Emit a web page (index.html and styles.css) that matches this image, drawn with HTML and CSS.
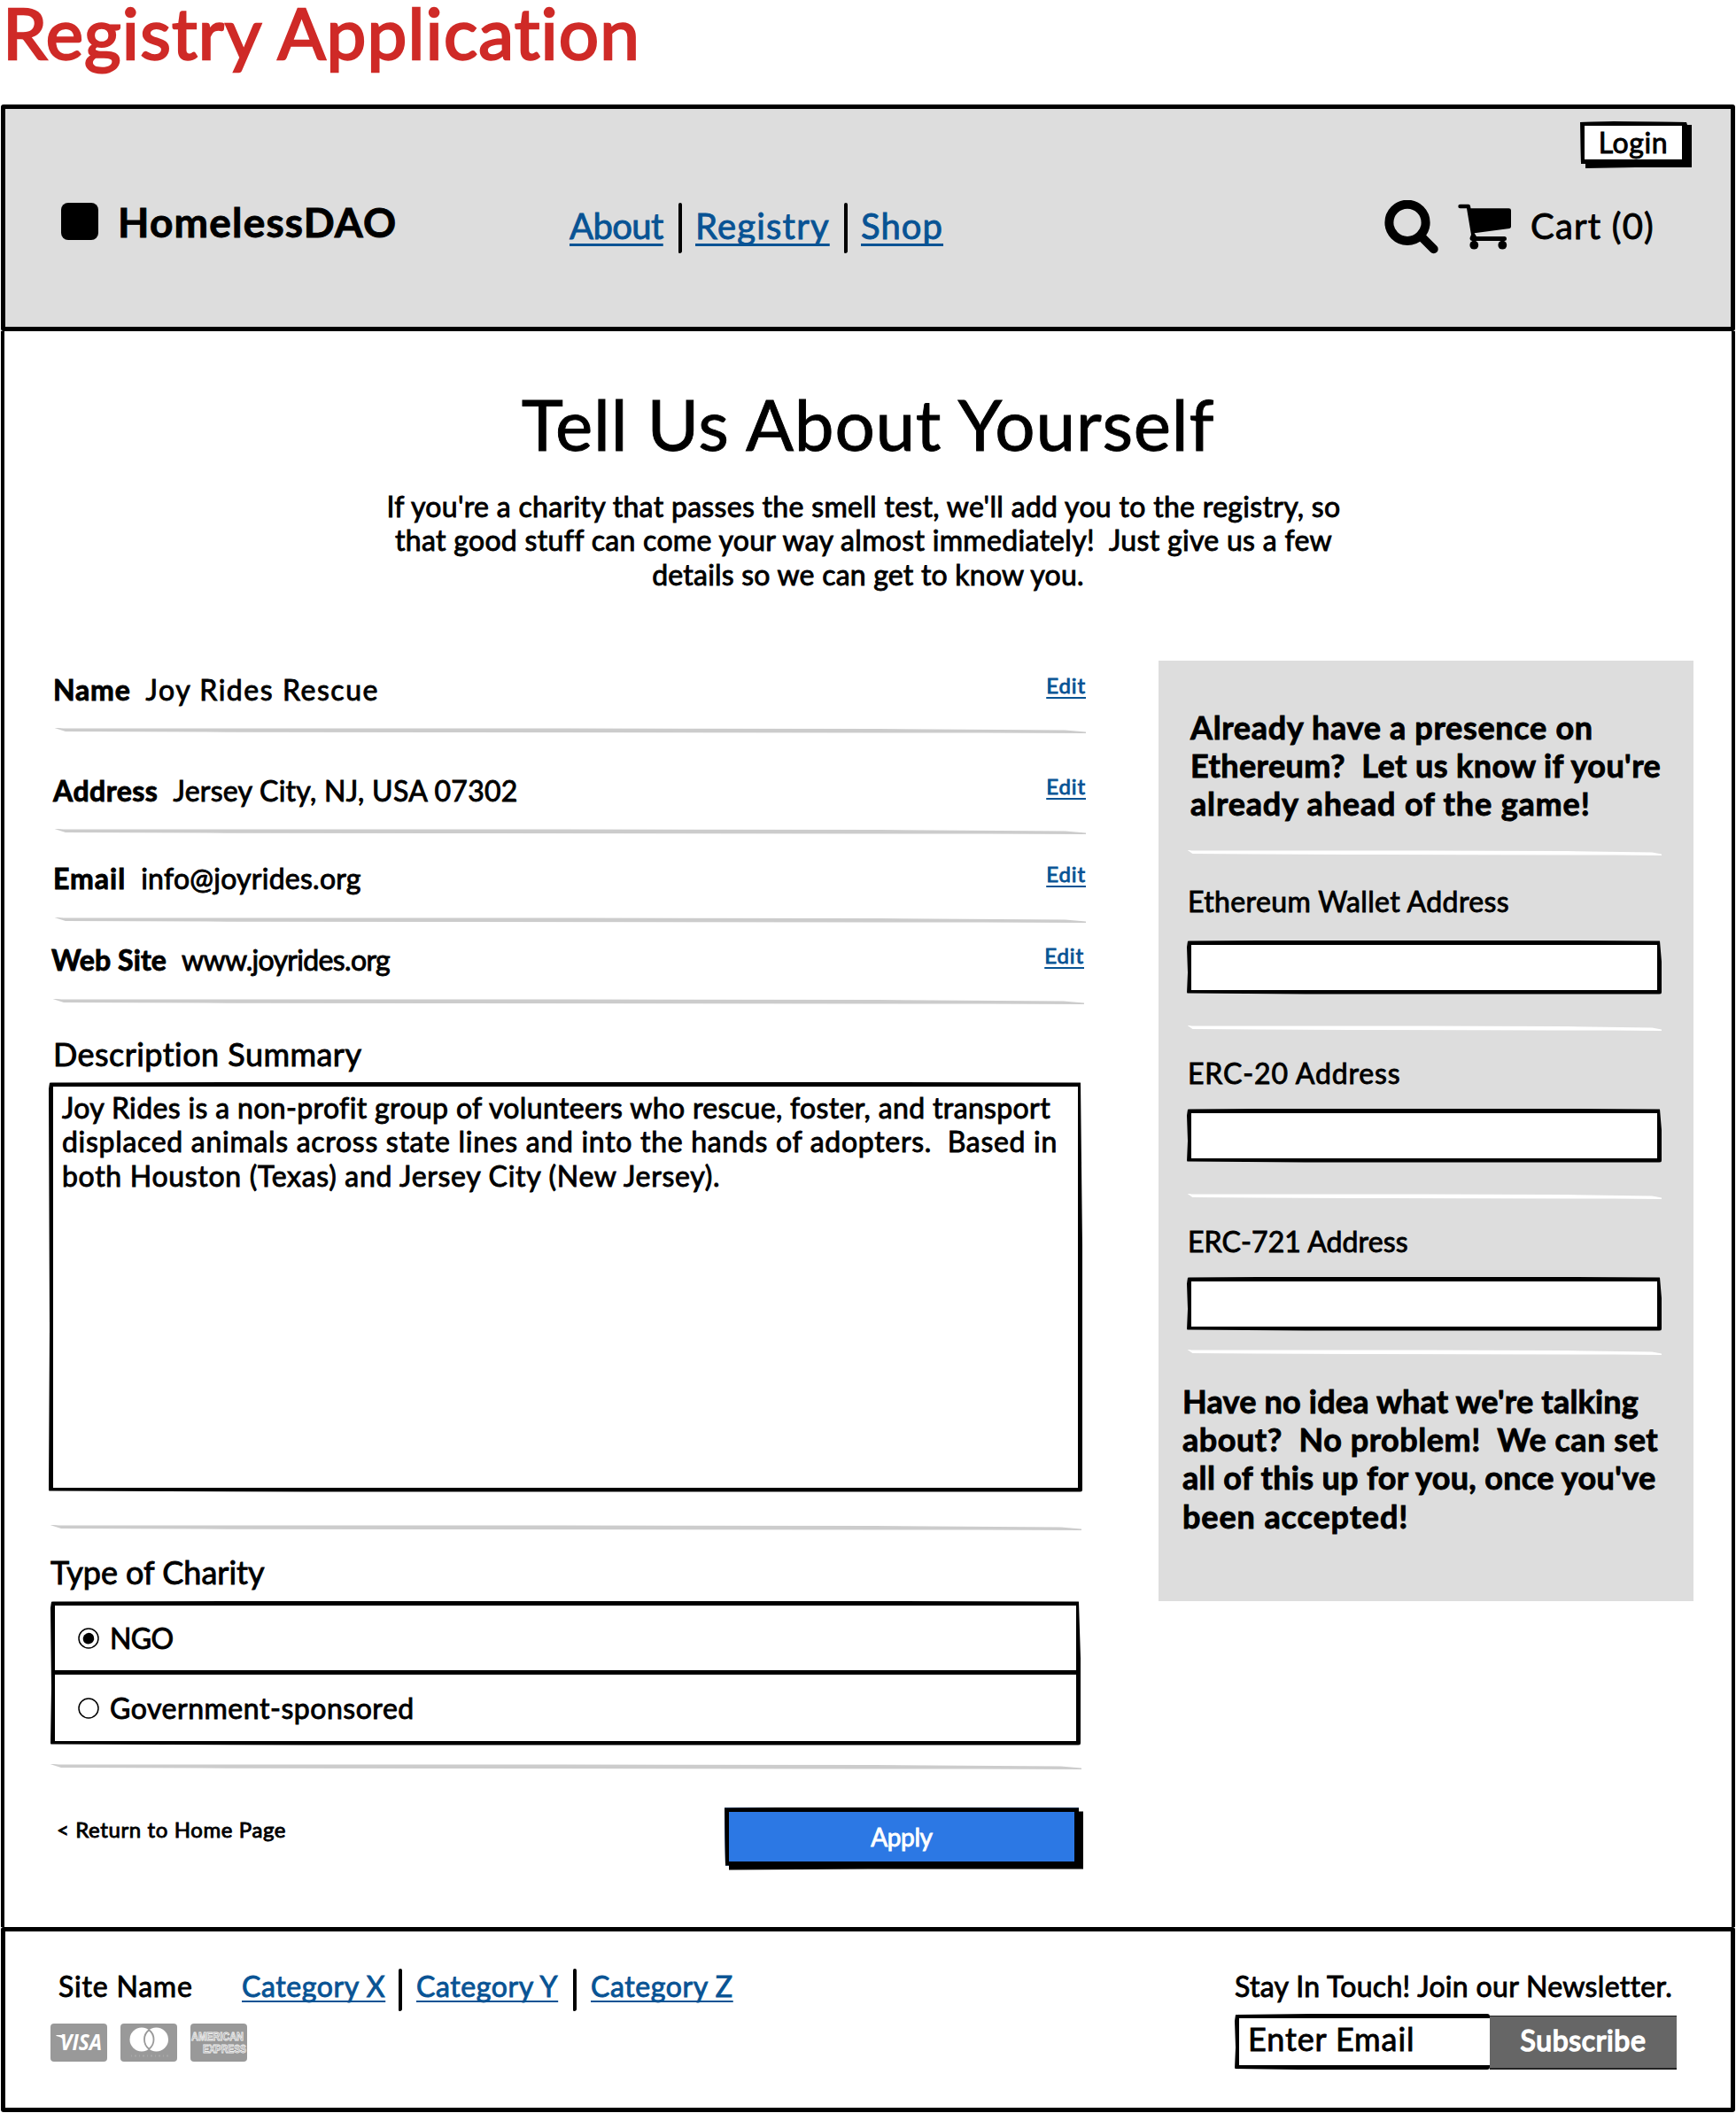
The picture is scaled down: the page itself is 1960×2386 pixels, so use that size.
FILE: index.html
```html
<!DOCTYPE html>
<html lang="en">
<head>
<meta charset="utf-8">
<title>Registry Application</title>
<link rel="stylesheet" href="styles.css">
</head>
<body>
<h1 class="page-title">Registry Application</h1>

<header class="topbar">
  <div class="login-row"><button class="login"><span>Login</span></button></div>
  <div class="nav-row">
    <div class="brand"><span class="logo"></span><span class="brand-name">HomelessDAO</span></div>
    <nav class="nav">
      <a class="nav-about">About</a><i class="sep"></i><a class="nav-registry">Registry</a><i class="sep"></i><a class="nav-shop">Shop</a>
    </nav>
    <div class="tools">
      <svg class="icon-search" width="62" height="62" viewBox="0 0 62 62" fill="none" stroke="#000" stroke-width="10" stroke-linecap="round"><circle cx="27" cy="25.3" r="20.6"/><path d="M44.5 43 56.7 55.2"/></svg>
      <svg class="icon-cart" width="62" height="62" viewBox="0 0 62 62"><path d="M3.6 4.7H13q1.7 0 2 1.7l.5 2.9h43q2.5 0 2.5 2.2V30q0 1.6-1.8 1.9L19.600 37.200 22 41H53.500a2.500 2.500 0 0 1 0 5H17q-3-.5-2.400-3.400L16 39 11 9.300H3.600a2.300 2.300 0 0 1 0-4.600Z"/><circle cx="19.300" cy="50.700" r="4.900"/><circle cx="51.300" cy="50.700" r="4.900"/></svg>
      <span class="cart-label">Cart (0)</span>
    </div>
  </div>
</header>

<main class="page">
  <section class="hero">
    <h2>Tell Us About Yourself</h2>
    <p>
      <span>If you're a charity that passes the smell test, we'll add you to the registry, so</span>
      <span>that good stuff can come your way almost immediately!&nbsp; Just give us a few</span>
      <span class="hero-last">details so we can get to know you.</span>
    </p>
  </section>

  <div class="columns">
    <section class="form">
      <div class="row row-name"><b>Name</b><span>Joy Rides Rescue</span><a>Edit</a></div>
      <div class="rule"></div>
      <div class="row row-address"><b>Address</b><span>Jersey City, NJ, USA 07302</span><a>Edit</a></div>
      <div class="rule"></div>
      <div class="row row-email"><b>Email</b><span>info@joyrides.org</span><a>Edit</a></div>
      <div class="rule"></div>
      <div class="row row-site"><b>Web Site</b><span>www.joyrides.org</span><a>Edit</a></div>
      <div class="rule rule-site"></div>

      <h3 class="summary-title">Description Summary</h3>
      <div class="summary sketch">
        <span class="s1">Joy Rides is a non-profit group of volunteers who rescue, foster, and transport</span>
        <span class="s2">displaced animals across state lines and into the hands of adopters.&nbsp; Based in</span>
        <span class="s2">both Houston (Texas) and Jersey City (New Jersey).</span>
      </div>
      <div class="rule rule-wide rule-after-summary"></div>

      <h3 class="type-title">Type of Charity</h3>
      <div class="options sketch">
        <label class="option">
          <svg class="radio" width="24" height="24" viewBox="0 0 24 24"><circle cx="12" cy="12" r="11" fill="#fff" stroke="#000" stroke-width="1.500"/><path d="M7 8.500Q12 3.500 17 8q3 5-1 9-5 3-9-.5-2.500-4 0-8Z"/></svg>
          <span class="ngo">NGO</span>
        </label>
        <label class="option">
          <svg class="radio" width="24" height="24" viewBox="0 0 24 24"><circle cx="12" cy="12" r="11" fill="#fff" stroke="#000" stroke-width="1.500"/></svg>
          <span class="gov">Government-sponsored</span>
        </label>
      </div>
      <div class="rule rule-wide rule-after-options"></div>

      <div class="actions">
        <a class="return">&lt; Return to Home Page</a>
        <button class="apply"><span>Apply</span></button>
      </div>
    </section>

    <aside class="side">
      <p class="side-lead">
        <span class="a1">Already have a presence on</span>
        <span class="a2">Ethereum?&nbsp; Let us know if you're</span>
        <span class="a3">already ahead of the game!</span>
      </p>
      <div class="rule rule-white"></div>
      <label class="side-label l1">Ethereum Wallet Address</label>
      <div class="field sketch"></div>
      <div class="rule rule-white"></div>
      <label class="side-label l2">ERC-20 Address</label>
      <div class="field sketch"></div>
      <div class="rule rule-white"></div>
      <label class="side-label l3">ERC-721 Address</label>
      <div class="field sketch"></div>
      <div class="rule rule-white rule-last"></div>
      <p class="side-note">
        <span class="b1">Have no idea what we're talking</span>
        <span class="b2">about?&nbsp; No problem!&nbsp; We can set</span>
        <span class="b3">all of this up for you, once you've</span>
        <span class="b4">been accepted!</span>
      </p>
    </aside>
  </div>
</main>

<footer class="footer">
  <div class="foot-left">
    <div class="foot-nav">
      <span class="site-name">Site Name</span>
      <a>Category X</a><i class="sep"></i><a>Category Y</a><i class="sep"></i><a>Category Z</a>
    </div>
    <div class="cards">
      <svg width="64" height="43" viewBox="0 0 64 43"><rect width="64" height="43" rx="4" fill="#999"/><text x="11" y="30" class="visa" textLength="47" lengthAdjust="spacingAndGlyphs">VISA</text><path d="M6.500 13h7l2 6q-3-4-9-5Z" fill="#fff"/></svg>
      <svg width="64" height="43" viewBox="0 0 64 43"><rect width="64" height="43" rx="4" fill="#999"/><circle cx="24" cy="18" r="13.500" fill="#fff"/><circle cx="40.500" cy="18" r="13.500" fill="#fff"/><path d="M32.250 7.300a13.500 13.500 0 0 1 0 21.400 13.500 13.500 0 0 1 0-21.400Z" fill="#fff" stroke="#999" stroke-width="1.800"/><path d="M12 36.500H54" stroke="#a8a8a8" stroke-width="2" stroke-dasharray="1 3 2 3"/></svg>
      <svg width="64" height="43" viewBox="0 0 64 43"><rect width="64" height="43" rx="4" fill="#999"/><text x="1" y="19" class="amex" textLength="59" lengthAdjust="spacingAndGlyphs">AMERICAN</text><text x="14" y="32.500" class="amex" textLength="49" lengthAdjust="spacingAndGlyphs">EXPRESS</text></svg>
    </div>
  </div>
  <div class="newsletter">
    <div class="newsletter-title">Stay In Touch! Join our Newsletter.</div>
    <div class="subscribe-box">
      <div class="email sketch">Enter Email</div>
      <button class="subscribe">Subscribe</button>
    </div>
  </div>
</footer>
</body>
</html>
```
FILE: styles.css
```css
* { box-sizing: border-box; }

body {
  margin: 0;
  width: 1960px;
  height: 2386px;
  background: #fff;
  color: #000;
  font: 400 32px/40px Lato, "Open Sans", sans-serif;
  -webkit-text-stroke: .028em;
  font-kerning: normal;
}

h1, h2, h3, p { margin: 0; font-weight: 400; }
button { font: inherit; -webkit-text-stroke: inherit; border: 0; padding: 0; margin: 0; color: inherit; }
a { color: #085394; text-decoration: underline; text-decoration-skip-ink: none; }
.sep { width: 4px; background: #000; border-radius: 3px 3px 4px 2px; }

.page-title {
  height: 118px;
  padding: 0 0 0 3px;
  font-size: 80px;
  line-height: 72px;
  letter-spacing: 1.150px;
  color: #cf2a27;
  -webkit-text-stroke: .03em;
}

/* hand-drawn box outline: border with slightly uneven outer edges */
.sketch {
  background: #fff;
  border: 5px solid #000;
  border-radius: 3px;
  clip-path: polygon(1px 1px, 30% 0, 70% 0, calc(100% - 2px) 1px, 100% 40%, 100% 100%, 60% 100%, 25% 100%, 0 calc(100% - 1px), 1px 60%, 0 8px);
}

/* header */
.topbar {
  height: 256px;
  margin: 0 1px;
  border: 5px solid #000;
  border-radius: 3px;
  background: #ddd;
}
.login-row { display: flex; justify-content: flex-end; padding: 14px 44px 0 0; height: 103px; }
.login {
  width: 126px;
  height: 53px;
  padding: 0 6px 5px 0;
  background: #000;
  clip-path: polygon(0 1px, 30% 0, 120px 1px, 121px 4px, 100% 4px, 100% 52px, 50% 52px, 6px 100%, 6px 48px, 1px 48px);
}
.login span {
  display: block;
  height: 48px;
  border: 5px solid #000;
  background: #fff;
  line-height: 37px;
  letter-spacing: .6px;
}
.nav-row { display: flex; align-items: flex-start; padding: 0 86px 0 63px; }
.brand { display: flex; width: 574px; }
.logo { width: 42px; height: 42px; margin: 3px 22px 0 0; border-radius: 8px; background: #000; }
.brand-name { font-size: 46px; line-height: 49px; font-weight: 700; letter-spacing: 1.200px; }
.nav { display: flex; font-size: 40px; line-height: 58px; }
.nav a, .foot-nav a { text-underline-offset: 5px; text-decoration-thickness: 3px; }
.nav .sep { height: 57px; margin: 3px 15px 0 16px; }
.nav-about { width: 107px; letter-spacing: -.6px; }
.nav-registry { width: 152px; letter-spacing: 1.200px; }
.nav-shop { letter-spacing: 1.060px; }
.tools { display: flex; margin-left: auto; font-size: 40px; line-height: 58px; }
.icon-cart { margin: 0 21px 0 21px; }
.cart-label { letter-spacing: 1.200px; white-space: nowrap; }

/* page body */
.page {
  height: 1802px;
  margin: 0 1px;
  border: 4px solid #000;
  border-width: 0 4px;
}
.hero { padding-top: 56px; text-align: center; }
.hero h2 { font-size: 80px; line-height: 96px; letter-spacing: .75px; }
.hero p { margin-top: 27px; padding-right: 10px; line-height: 38.400px; letter-spacing: .31px; }
.hero span { display: block; }
.hero .hero-last { padding-left: 10px; letter-spacing: .22px; }

.columns { display: flex; align-items: flex-start; justify-content: space-between; margin-top: 77.400px; padding: 0 43px 0 50px; }

.form { width: 1171px; padding-top: 11px; }
.row { display: flex; width: 1166px; margin-left: 5px; height: 40px; line-height: 43px; }
.row b { font-weight: 700; margin-right: 17px; }
.row a {
  margin-left: auto;
  font-size: 24px;
  line-height: 34px;
  letter-spacing: .9px;
  text-underline-offset: 4px;
  text-decoration-thickness: 2px;
}
.row-address { margin-top: 43px; }
.row-email { margin-top: 28px; }
.row-site { margin: 20px 0 0 3px; }
.row-name b { letter-spacing: .8px; }
.row-name span { letter-spacing: 1.550px; }
.row-address b { letter-spacing: .5px; }
.row-address span { letter-spacing: .28px; }
.row-email b { letter-spacing: 1px; }
.row-email span { letter-spacing: .25px; }
.row-site b { letter-spacing: .1px; }
.row-site span { letter-spacing: -.67px; }

.rule {
  width: 1166px;
  height: 7px;
  margin: 25px 0 -1px 5px;
  background: #ccc;
  clip-path: polygon(0 0, 1% 1px, 50% 1px, 80% 1.500px, 98% 3px, 100% 5px, 100% 6.500px, 90% 6px, 40% 5.500px, 15% 5px, 1.200% 4.500px);
}
.row-email + .rule, .rule-site { margin-top: 26px; }
.rule-site { margin-left: 3px; }
.rule-wide { margin-left: 0; }
.rule-after-summary { margin-top: 37px; }
.rule-after-options { margin-top: 21px; }

.summary-title, .type-title { font-size: 36px; line-height: 46px; }
.summary-title { margin: 33px 0 0 5px; letter-spacing: .45px; }
.type-title { margin: 24px 0 0 2px; }
.summary { width: 1167px; height: 463px; margin-top: 9px; padding: 5px 10px; line-height: 38.600px; white-space: nowrap; }
.summary span { display: block; }
.s1 { letter-spacing: .36px; }
.s2 { letter-spacing: .7px; }

.options { width: 1163px; height: 163px; margin: 10px 0 0 2px; }
.option { display: flex; align-items: center; height: 73px; padding: 2px 0 0 26px; }
.option + .option { height: 80px; border-top: 5px solid #000; }
.radio { margin-right: 12px; }
.ngo { letter-spacing: -.6px; }
.gov { letter-spacing: .53px; }

.actions { display: flex; justify-content: space-between; align-items: flex-start; margin-top: 43px; padding: 0 3px 0 9px; }
.return { color: #000; text-decoration: none; font-size: 24px; line-height: 33px; margin-top: 8px; letter-spacing: .6px; }
.apply {
  width: 405px;
  height: 71px;
  padding: 0 5px 5px 0;
  background: #000;
  clip-path: polygon(0 1px, 30% 0, 400px 1px, 400px 5px, 100% 5px, 100% 70px, 40% 70px, 5px 100%, 5px 66px, 1px 66px);
}
.apply span {
  display: block;
  height: 66px;
  border: 5px solid #000;
  background: #2c78e4;
  color: #fff;
  font-size: 28px;
  line-height: 56px;
  letter-spacing: -.4px;
}

/* side panel */
.side { width: 604px; height: 1062px; padding: 54px 0 0 32px; background: #ddd; }
.side p { font-size: 36px; line-height: 43.400px; font-weight: 700; white-space: nowrap; }
.side p span { display: block; }
.side-lead { height: 130px; margin-left: 4px; }
.side .rule { width: 536px; margin: 35px 0 -1px; background: #fff; }
.side .side-lead + .rule { margin-top: 30px; }
.side .rule-last { margin-top: 21px; }
.side-label { display: block; height: 40px; margin-top: 26px; padding-left: 1px; line-height: 43px; }
.side .l1 { height: 44px; margin-top: 30px; letter-spacing: .38px; }
.l2 { letter-spacing: .85px; }
.l3 { letter-spacing: .1px; }
.field { width: 536px; height: 61px; margin-top: 22px; }
.side-note { margin: 31px 0 0 -5px; }
.a1 { letter-spacing: .68px; }
.a2 { letter-spacing: .42px; }
.a3 { letter-spacing: .84px; }
.b1 { letter-spacing: .2px; }
.b2 { letter-spacing: .54px; }
.b3 { letter-spacing: .33px; }
.b4 { letter-spacing: .9px; }

/* footer */
.footer {
  display: flex;
  justify-content: space-between;
  height: 209px;
  margin: 0 1px;
  padding: 42px 61px 0 51px;
  border: 5px solid #000;
  border-radius: 3px;
}
.foot-nav { display: flex; padding-left: 9px; letter-spacing: .6px; }
.foot-nav a { width: 163px; text-underline-offset: 4px; text-decoration-thickness: 2px; white-space: nowrap; }
.site-name { width: 207px; letter-spacing: .8px; }
.foot-nav .sep { height: 48px; margin: 0 16px 0 14px; }
.cards { display: flex; gap: 15px; margin-top: 14px; }
.visa { font: italic 700 25px "Open Sans", sans-serif; fill: #fff; }
.amex { font: 700 13px "Liberation Sans", sans-serif; fill: #999; stroke: #eee; stroke-width: .9px; -webkit-text-stroke: .9px #eee; }
.newsletter { width: 499px; }
.newsletter-title { letter-spacing: .32px; white-space: nowrap; }
.subscribe-box { display: flex; margin-top: 11px; }
.email {
  width: 288px;
  height: 63px;
  padding: 0 0 6px 10px;
  border-right: 0;
  font-size: 36px;
  line-height: 47px;
  letter-spacing: .9px;
  clip-path: polygon(1px 1px, 30% 0, 100% 0, 100% 100%, 25% 100%, 0 calc(100% - 1px), 1px 60%, 0 8px);
}
.subscribe {
  width: 211px;
  height: 61px;
  margin-top: 2px;
  border-top: 1px solid #222;
  border-bottom: 2px solid #222;
  padding-bottom: 4px;
  background: #666;
  color: #fff;
  letter-spacing: .66px;
  -webkit-text-stroke: .05em;
}
```
